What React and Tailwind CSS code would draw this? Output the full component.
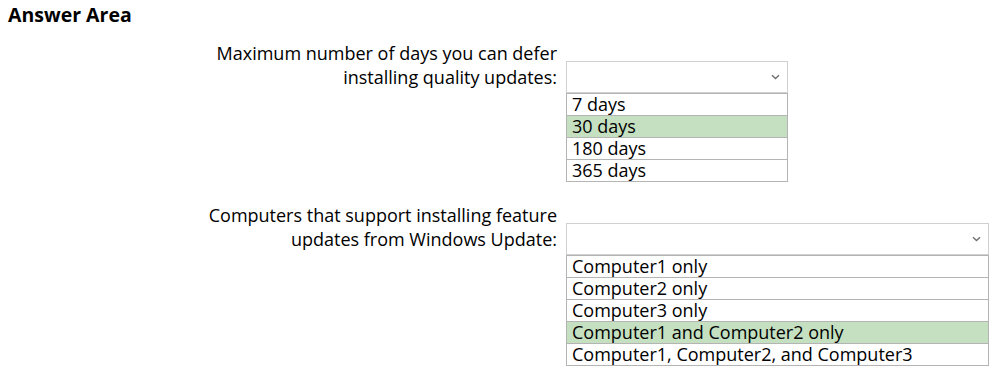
import React from 'react';

const groups = [
    {
        label: ['Maximum number of days you can defer', 'installing quality updates:'],
        width: 'w-[222px]',
        options: ['7 days', '30 days', '180 days', '365 days'],
        picked: 1,
    },
    {
        label: ['Computers that support installing feature', 'updates from Windows Update:'],
        width: 'w-[423px]',
        options: ['Computer1 only', 'Computer2 only', 'Computer3 only', 'Computer1 and Computer2 only', 'Computer1, Computer2, and Computer3'],
        picked: 3,
    },
];

const Chevron = () => (
    <svg width="9" height="6" viewBox="0 0 9 6" className="text-[#707070]">
        <path d="M1 1.2 L4.5 4.6 L8 1.2" fill="none" stroke="currentColor" strokeWidth="1.4" />
    </svg>
);

const App = () => {
    return (
        <div className="w-[990px] h-[370px] bg-white text-black font-['Open_Sans',sans-serif] overflow-hidden">
            <h1 className="px-2 pt-[3px] text-[19.5px] leading-6 font-bold">Answer Area</h1>

            <div className="mt-[14px] flex flex-col gap-[21px]">
                {groups.map((g, gi) => (
                    <div key={gi} className="flex">
                        {/* label */}
                        <div className="w-[557px] text-right text-[18px] leading-6">
                            {g.label.map((l) => <div key={l}>{l}</div>)}
                        </div>

                        {/* dropdown + options */}
                        <div className={`ml-[9px] mt-[20px] ${g.width}`}>
                            <div className="h-[32px] border border-[#d0d0d0] flex items-center justify-end pr-[7px]">
                                <Chevron />
                            </div>
                            <div className="border border-[#b4b4b4] border-t-0">
                                {g.options.map((o, i) => (
                                    <div
                                        key={o}
                                        className={`h-[22px] leading-[21px] pl-[5px] text-[18px] border-t border-[#b4b4b4] ${i === g.picked ? 'bg-[#c5e0c0]' : ''}`}
                                    >
                                        {o}
                                    </div>
                                ))}
                            </div>
                        </div>
                    </div>
                ))}
            </div>
        </div>
    );
};

export default App;
